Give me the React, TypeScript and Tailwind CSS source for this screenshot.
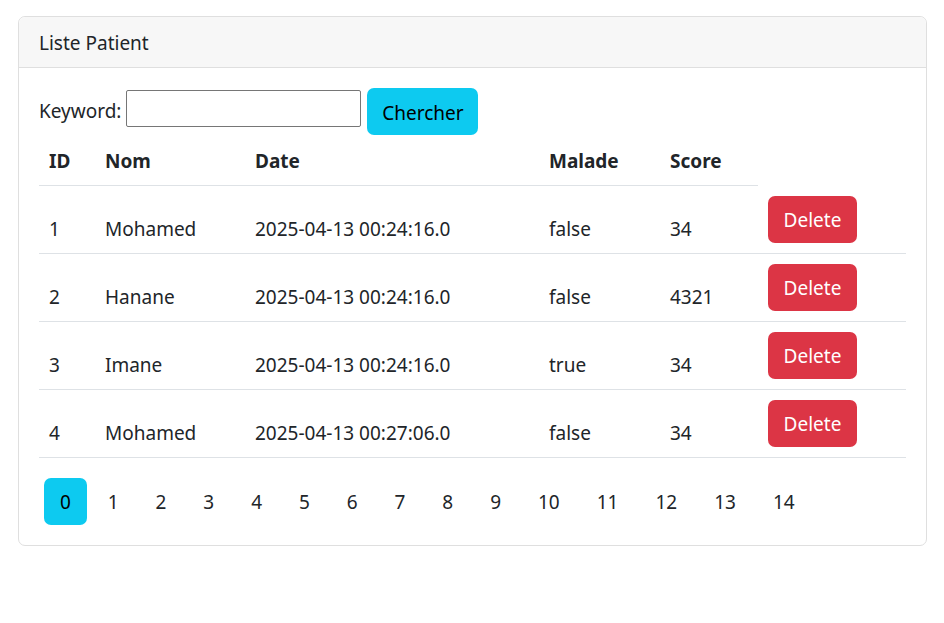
import React from 'react';

interface Patient {
  id: number;
  nom: string;
  date: string;
  malade: boolean;
  score: number;
}

const patients: Patient[] = [
  { id: 1, nom: 'Mohamed', date: '2025-04-13 00:24:16.0', malade: false, score: 34 },
  { id: 2, nom: 'Hanane', date: '2025-04-13 00:24:16.0', malade: false, score: 4321 },
  { id: 3, nom: 'Imane', date: '2025-04-13 00:24:16.0', malade: true, score: 34 },
  { id: 4, nom: 'Mohamed', date: '2025-04-13 00:27:06.0', malade: false, score: 34 },
];

const pages = Array.from({ length: 15 }, (_, i) => i);

export default function App() {
  const currentPage = 0;

  return (
    <div className="min-h-[623px] bg-white pt-4 pl-[18px] pr-[17px] font-['Noto_Sans',sans-serif] text-[19px] leading-[30px] text-[#212529]">
      <div className="rounded-[7px] border border-[#dfdfdf]">
        <div className="rounded-t-[7px] border-b border-[#dfdfdf] bg-[#f7f7f7] px-5 pt-[11px] pb-[9px]">
          Liste Patient
        </div>
        <div className="p-5">
          <form className="flex items-start" onSubmit={(e) => e.preventDefault()}>
            <label className="mt-[8px] mr-[5px]">Keyword:</label>
            <input
              type="text"
              className="mt-[2px] mr-[6px] h-[37px] w-[235px] rounded-[2px] border border-[#767676] px-1 outline-none"
            />
            <button
              type="submit"
              className="h-[47px] w-[111px] rounded-[7px] bg-[#0dcaf0] pt-[2px] text-black"
            >
              Chercher
            </button>
          </form>

          <table className="mb-5 w-full table-fixed border-collapse text-left">
            <colgroup>
              <col className="w-[56px]" />
              <col className="w-[150px]" />
              <col className="w-[294px]" />
              <col className="w-[121px]" />
              <col className="w-[98px]" />
              <col />
            </colgroup>
            <thead>
              <tr>
                <th className="border-b border-[#dee2e6] px-[10px] pt-[11px] pb-[9px] align-bottom font-bold">ID</th>
                <th className="border-b border-[#dee2e6] px-[10px] pt-[11px] pb-[9px] align-bottom font-bold">Nom</th>
                <th className="border-b border-[#dee2e6] px-[10px] pt-[11px] pb-[9px] align-bottom font-bold">Date</th>
                <th className="border-b border-[#dee2e6] px-[10px] pt-[11px] pb-[9px] align-bottom font-bold">Malade</th>
                <th className="border-b border-[#dee2e6] px-[10px] pt-[11px] pb-[9px] align-bottom font-bold">Score</th>
              </tr>
            </thead>
            <tbody>
              {patients.map((p) => (
                <tr key={p.id} className="border-b border-[#dee2e6]">
                  <td className="px-[10px] pt-[10px] pb-[9px] align-bottom">{p.id}</td>
                  <td className="px-[10px] pt-[10px] pb-[9px] align-bottom">{p.nom}</td>
                  <td className="px-[10px] pt-[10px] pb-[9px] align-bottom">{p.date}</td>
                  <td className="px-[10px] pt-[10px] pb-[9px] align-bottom">{String(p.malade)}</td>
                  <td className="px-[10px] pt-[10px] pb-[9px] align-bottom">{p.score}</td>
                  <td className="px-[10px] pt-[10px] pb-[10px] align-bottom">
                    <button className="h-[47px] w-[89px] rounded-[7px] bg-[#dc3545] pt-[2px] text-white">
                      Delete
                    </button>
                  </td>
                </tr>
              ))}
            </tbody>
          </table>

          <ul className="flex">
            {pages.map((page) => (
              <li key={page} className="ml-[5px]">
                <button
                  className={
                    (page < 10 ? 'w-[42.8px] ' : 'w-[53.75px] ') +
                    (page === currentPage
                      ? 'h-[47px] rounded-[7px] bg-[#0dcaf0] pt-[2px] text-black'
                      : 'h-[47px] rounded-[7px] pt-[2px] text-[#212529]')
                  }
                >
                  {page}
                </button>
              </li>
            ))}
          </ul>
        </div>
      </div>
    </div>
  );
}
